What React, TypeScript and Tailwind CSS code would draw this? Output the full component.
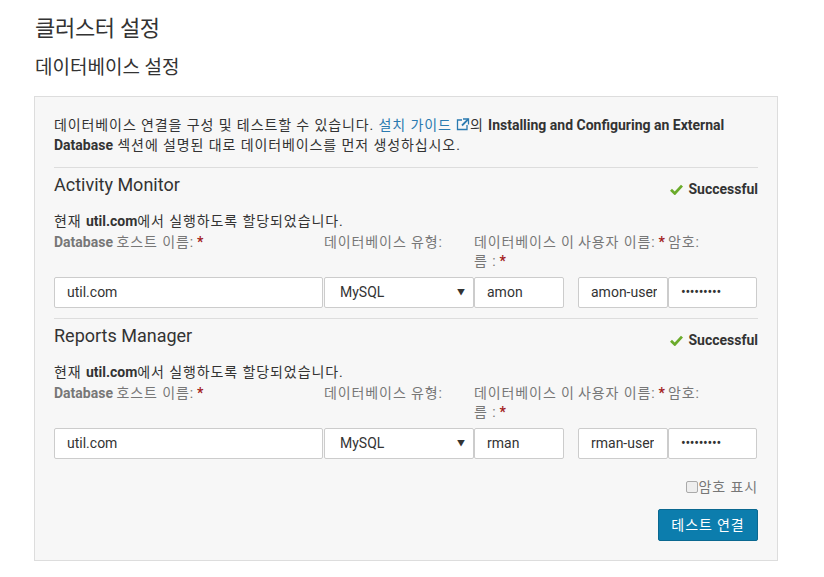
import React from "react";

const FONT = { fontFamily: 'Roboto, "Noto Sans CJK KR", "Noto Sans", sans-serif' };

function K({ children }: { children: React.ReactNode }) {
  return <span className="tracking-[0.9px]">{children}</span>;
}

function Check() {
  return (
    <svg width="13" height="11" viewBox="0 0 13 11" className="mr-[5px] mt-[1px]">
      <path d="M1 5.8 L4.8 9.4 L12 1.6" fill="none" stroke="#6bab2b" strokeWidth="2.8" strokeLinejoin="miter" />
    </svg>
  );
}

function ExtIcon() {
  return (
    <svg width="14" height="13" viewBox="0 0 14 13" className="inline-block align-[-1px] ml-[4px]">
      <path d="M6 2 H1.5 V11.5 H11 V7" fill="none" stroke="#2a7ab0" strokeWidth="1.3" />
      <path d="M7 1 H12.5 V6.5" fill="none" stroke="#2a7ab0" strokeWidth="1.3" />
      <path d="M12.3 1.2 L6 7.5" fill="none" stroke="#2a7ab0" strokeWidth="1.8" />
    </svg>
  );
}

function Req() {
  return <span className="text-[#a31d1d] font-bold ml-[3px]">*</span>;
}

function Section({ title, db, user }: { title: string; db: string; user: string }) {
  const inputCls =
    "h-[31px] bg-white border border-[#cccccc] rounded-[2px] flex items-center text-[14px] text-[#333333]";
  return (
    <div>
      <div className="border-t border-[#dddddd]" />
      <div className="flex justify-between items-start pt-[6px]">
        <div className="text-[18px] leading-[21px] text-[#333333]">{title}</div>
        <div className="flex items-center text-[14px] font-bold text-[#333333] leading-[20px] mt-[5px]">
          <Check />
          Successful
        </div>
      </div>
      <div className="text-[14px] leading-[20px] text-[#333333] mt-[12px]">
        <K>현재 </K>
        <span className="font-bold">util.com</span>
        <K>에서 실행하도록 할당되었습니다.</K>
      </div>
      <div className="grid grid-cols-[270px_150px_104px_90px_89px] text-[14px] leading-[19px] text-[#777777] mt-[2px]">
        <div>
          <span className="font-bold">Database</span> <K>호스트 이름:</K>
          <Req />
        </div>
        <div>
          <K>데이터베이스 유형:</K>
        </div>
        <div className="whitespace-nowrap">
          <K>데이터베이스 이</K>
          <br />
          <K>름 :</K>
          <Req />
        </div>
        <div className="whitespace-nowrap">
          <K>사용자 이름:</K>
          <Req />
        </div>
        <div>
          <K>암호:</K>
        </div>
      </div>
      <div className="grid grid-cols-[270px_150px_104px_90px_89px] mt-[6px]">
        <div className={inputCls + " pl-[12px] mr-[1px]"}>util.com</div>
        <div className={inputCls + " pl-[15px] pr-[8px] justify-between"}>
          <span>MySQL</span>
          <span className="text-[8px] text-[#333333]">▼</span>
        </div>
        <div className="pr-[14px]">
          <div className={inputCls + " pl-[12px]"}>{db}</div>
        </div>
        <div className={inputCls + " pl-[12px] pr-[10px]"}>
          <span className="block overflow-hidden whitespace-nowrap">{user}</span>
        </div>
        <div className={inputCls + " pl-[12px] text-[11px] tracking-[-0.3px]"}>•••••••••</div>
      </div>
      <div className="h-[10px]" />
    </div>
  );
}

export default function App() {
  return (
    <div className="w-[824px] h-[577px] bg-white" style={FONT}>
      <div className="pl-[35px] pt-[14px]">
        <div className="text-[22px] leading-[30px] tracking-[-0.3px] text-[#333333]">클러스터 설정</div>
        <div className="text-[19px] leading-[24px] text-[#333333] mt-[12px]">데이터베이스 설정</div>
      </div>
      <div className="ml-[34px] mt-[16px] w-[744px] h-[465px] bg-[#f7f7f7] border border-[#dddddd] px-[19px] pt-[18px]">
        <div className="text-[14px] leading-[20px] text-[#333333] whitespace-nowrap">
          <K>데이터베이스 연결을 구성 및 테스트할 수 있습니다. </K>
          <span className="text-[#2a7ab0]">
            <K>설치 가이드</K>
            <ExtIcon />
          </span>
          <K>의 </K>
          <span className="font-bold">Installing and Configuring an External</span>
          <br />
          <span className="font-bold">Database</span>
          <K> 섹션에 설명된 대로 데이터베이스를 먼저 생성하십시오.</K>
        </div>
        <div className="h-[12px]" />
        <Section title="Activity Monitor" db="amon" user="amon-user" />
        <Section title="Reports Manager" db="rman" user="rman-user" />
        <div className="flex justify-end items-center mt-[8px] text-[14px] leading-[20px] text-[#777777]">
          <span className="w-[12px] h-[12px] border border-[#aaaaaa] rounded-[2px] bg-[#eeeeee] mr-[1px]" />
          <K>암호 표시</K>
        </div>
        <div className="flex justify-end mt-[12px]">
          <button className="w-[100px] h-[32px] bg-[#0c7dad] border border-[#0a6890] rounded-[2px] text-white text-[14px] leading-[20px]">
            <K>테스트 연결</K>
          </button>
        </div>
      </div>
    </div>
  );
}
